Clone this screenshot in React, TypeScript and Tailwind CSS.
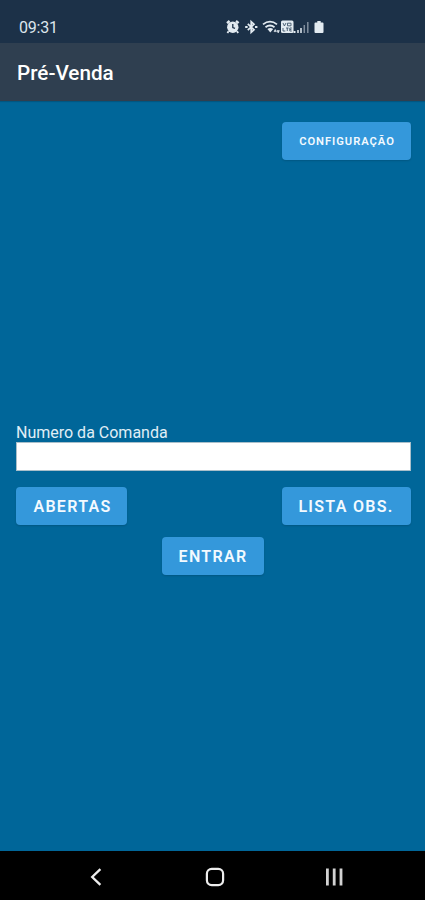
import { useState } from "react";
import type { ReactNode } from "react";
import clsx from "clsx";

function StatusIcons() {
  return (
    <svg width="100" height="16" viewBox="0 0 100 16" fill="none" className="text-[#e3ebf1]">
      {/* alarm */}
      <path d="M2 4.2 4.6 2M13.6 4.2 11 2" stroke="currentColor" strokeWidth="2.4" />
      <circle cx="7.8" cy="8.2" r="5.7" fill="currentColor" />
      <path d="M3.6 12.2 2.4 14M12 12.2l1.2 1.8" stroke="currentColor" strokeWidth="1.8" />
      <path d="M7.8 5v3.5l2.2.8" stroke="#1c3148" strokeWidth="1.3" />
      {/* bluetooth */}
      <path d="m22.8 4.8 6.2 6-2.8 2.6V2.6L29 5.2l-6.2 6" stroke="currentColor" strokeWidth="1.7" />
      <path d="M20.2 8h2.4M30 8h2.4" stroke="currentColor" strokeWidth="2" />
      {/* wifi with traffic arrows */}
      <path d="M38 5.4q7-5.4 14 0M40.5 8.2q4.5-3.4 9 0" stroke="currentColor" strokeWidth="1.8" />
      <path d="m42.4 10 2.9 3.6L48.2 10q-2.9-1.8-5.8 0Z" fill="currentColor" />
      <path d="M49 12.6h2.4l-1.2-2.2ZM52 11.6h2.4l-1.2 2.4Z" fill="currentColor" stroke="currentColor" strokeWidth=".6" />
      {/* volte */}
      <rect x="56" y="1.5" width="12.5" height="12.5" rx="1.5" fill="currentColor" />
      <path
        d="m58 4 1.4 3L61 4M62.5 4.2h3.5v2.6h-3.5ZM58 9v3h2.3M61 9h2.6M62.3 9v3M66.8 9h-2v3h2M64.8 10.5h1.6"
        stroke="#40566b"
        strokeWidth=".9"
      />
      <path d="M68.5 12h2v2h-2Z" fill="currentColor" />
      {/* signal */}
      <path d="M73 11v3M76 9v5" stroke="currentColor" strokeWidth="1.5" />
      <path d="M79.3 6v8M82.8 3v11" stroke="currentColor" strokeOpacity=".5" strokeWidth="1.5" />
      {/* battery */}
      <path d="M92.3 2h3.4v1.4h1.8q1 0 1 1V13q0 1-1 1h-7q-1 0-1-1V4.4q0-1 1-1h1.8Z" fill="currentColor" />
    </svg>
  );
}

function Button({ children, className }: { children: ReactNode; className?: string }) {
  return (
    <button
      type="button"
      className={clsx(
        "flex h-[38px] items-center justify-center whitespace-nowrap rounded-[4px] bg-[#3498db] pt-0.5 font-semibold text-[#f3faff] shadow-[0_1px_2px_rgba(0,0,0,0.15)]",
        className,
      )}
    >
      {children}
    </button>
  );
}

function NavBar() {
  return (
    <nav className="flex h-[49px] items-center bg-black pl-[86px] text-[#ededed]">
      <svg width="20" height="20" viewBox="0 0 20 20" fill="none" className="mt-[3px]">
        <path d="m14.4 2.2-8.2 7.8 8.2 7.8" stroke="currentColor" strokeWidth="2.3" />
      </svg>
      <svg width="20" height="20" viewBox="0 0 20 20" fill="none" className="ml-[99px] mt-[3px]">
        <rect x="1.9" y="1.9" width="16.2" height="16.2" rx="4.8" stroke="currentColor" strokeWidth="2.2" />
      </svg>
      <svg width="20" height="20" viewBox="0 0 20 20" fill="none" className="ml-[99px] mt-[3px]">
        <path d="M3.4 1.5v17M10.2 1.5v17M17 1.5v17" stroke="#d2d2d2" strokeWidth="2.8" />
      </svg>
    </nav>
  );
}

export default function App() {
  const [comanda, setComanda] = useState("");

  return (
    <div className="flex h-[900px] w-[425px] flex-col overflow-hidden bg-[#006699] font-['Roboto',sans-serif]">
      <div className="flex h-[43px] items-center bg-[#1c3148] pl-[19px] pt-[11px]">
        <span className="w-[206px] pt-0.5 text-base tracking-[-0.2px] text-[#dde5ec]">09:31</span>
        <StatusIcons />
      </div>
      <header className="z-10 flex h-[58px] items-center bg-[#2f3f50] pl-[17px] pt-1 shadow-[0_1px_1px_rgba(0,0,0,0.15)]">
        <h1 className="text-[20.7px] font-medium text-white">Pré-Venda</h1>
      </header>

      <main className="flex flex-1 flex-col pl-4 pr-[14px] pt-[21px]">
        <Button className="mr-[0.5px] w-[129px] self-end pl-[2px] text-[11.2px] tracking-[0.96px]">CONFIGURAÇÃO</Button>

        <label htmlFor="comanda" className="mt-[263px] text-base leading-[19px] text-[#e0eef6]">
          Numero da Comanda
        </label>
        <input
          id="comanda"
          value={comanda}
          onChange={(e) => setComanda(e.target.value)}
          className="h-[29px] w-full border border-[#a9bfca] bg-white px-2 text-base text-black outline-none"
        />

        <div className="mt-4 flex justify-between pr-[0.5px]">
          <Button className="w-[111px] pl-0.5 text-base tracking-[1.3px]">ABERTAS</Button>
          <Button className="w-[129px] text-base tracking-[1.3px]">LISTA OBS.</Button>
        </div>
        <Button className="ml-[146px] mt-3 w-[102px] text-base tracking-[1.3px]">ENTRAR</Button>
      </main>

      <NavBar />
    </div>
  );
}
